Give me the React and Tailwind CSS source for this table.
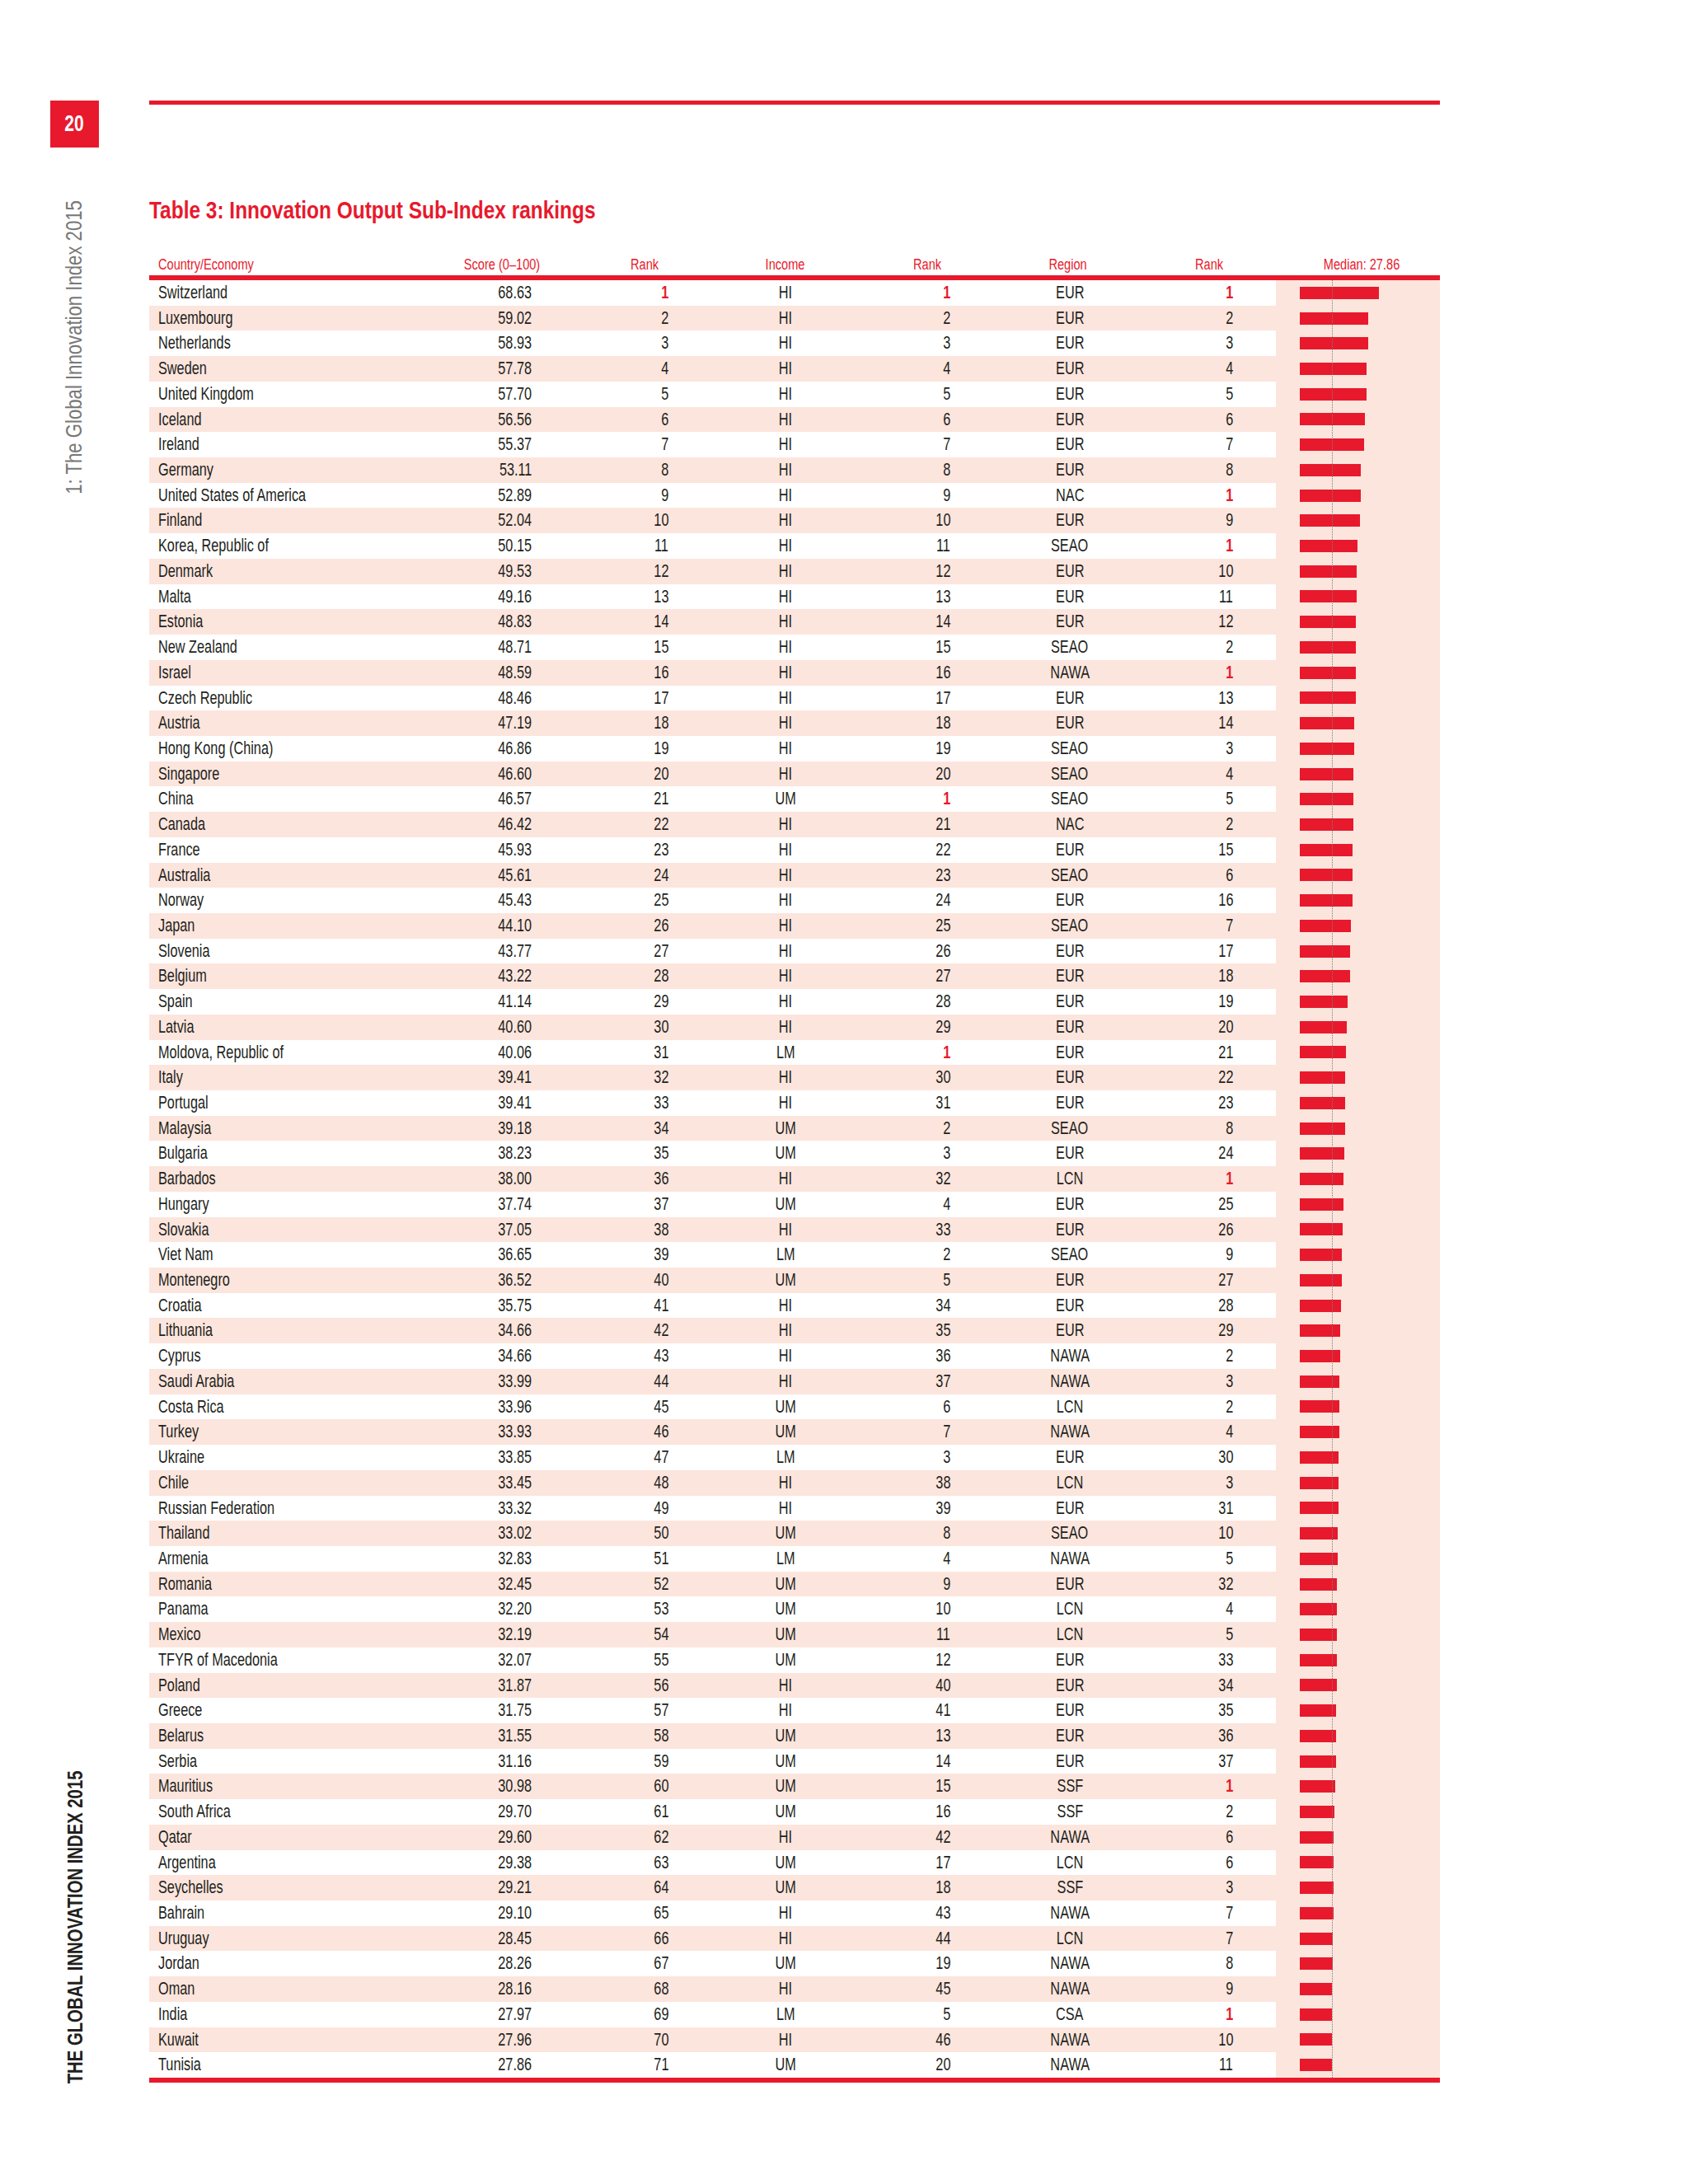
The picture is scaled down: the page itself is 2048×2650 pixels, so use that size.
import React from "react";

const ROWS = [
  ["Switzerland", "68.63", 1, "HI", 1, "EUR", 1],
  ["Luxembourg", "59.02", 2, "HI", 2, "EUR", 2],
  ["Netherlands", "58.93", 3, "HI", 3, "EUR", 3],
  ["Sweden", "57.78", 4, "HI", 4, "EUR", 4],
  ["United Kingdom", "57.70", 5, "HI", 5, "EUR", 5],
  ["Iceland", "56.56", 6, "HI", 6, "EUR", 6],
  ["Ireland", "55.37", 7, "HI", 7, "EUR", 7],
  ["Germany", "53.11", 8, "HI", 8, "EUR", 8],
  ["United States of America", "52.89", 9, "HI", 9, "NAC", 1],
  ["Finland", "52.04", 10, "HI", 10, "EUR", 9],
  ["Korea, Republic of", "50.15", 11, "HI", 11, "SEAO", 1],
  ["Denmark", "49.53", 12, "HI", 12, "EUR", 10],
  ["Malta", "49.16", 13, "HI", 13, "EUR", 11],
  ["Estonia", "48.83", 14, "HI", 14, "EUR", 12],
  ["New Zealand", "48.71", 15, "HI", 15, "SEAO", 2],
  ["Israel", "48.59", 16, "HI", 16, "NAWA", 1],
  ["Czech Republic", "48.46", 17, "HI", 17, "EUR", 13],
  ["Austria", "47.19", 18, "HI", 18, "EUR", 14],
  ["Hong Kong (China)", "46.86", 19, "HI", 19, "SEAO", 3],
  ["Singapore", "46.60", 20, "HI", 20, "SEAO", 4],
  ["China", "46.57", 21, "UM", 1, "SEAO", 5],
  ["Canada", "46.42", 22, "HI", 21, "NAC", 2],
  ["France", "45.93", 23, "HI", 22, "EUR", 15],
  ["Australia", "45.61", 24, "HI", 23, "SEAO", 6],
  ["Norway", "45.43", 25, "HI", 24, "EUR", 16],
  ["Japan", "44.10", 26, "HI", 25, "SEAO", 7],
  ["Slovenia", "43.77", 27, "HI", 26, "EUR", 17],
  ["Belgium", "43.22", 28, "HI", 27, "EUR", 18],
  ["Spain", "41.14", 29, "HI", 28, "EUR", 19],
  ["Latvia", "40.60", 30, "HI", 29, "EUR", 20],
  ["Moldova, Republic of", "40.06", 31, "LM", 1, "EUR", 21],
  ["Italy", "39.41", 32, "HI", 30, "EUR", 22],
  ["Portugal", "39.41", 33, "HI", 31, "EUR", 23],
  ["Malaysia", "39.18", 34, "UM", 2, "SEAO", 8],
  ["Bulgaria", "38.23", 35, "UM", 3, "EUR", 24],
  ["Barbados", "38.00", 36, "HI", 32, "LCN", 1],
  ["Hungary", "37.74", 37, "UM", 4, "EUR", 25],
  ["Slovakia", "37.05", 38, "HI", 33, "EUR", 26],
  ["Viet Nam", "36.65", 39, "LM", 2, "SEAO", 9],
  ["Montenegro", "36.52", 40, "UM", 5, "EUR", 27],
  ["Croatia", "35.75", 41, "HI", 34, "EUR", 28],
  ["Lithuania", "34.66", 42, "HI", 35, "EUR", 29],
  ["Cyprus", "34.66", 43, "HI", 36, "NAWA", 2],
  ["Saudi Arabia", "33.99", 44, "HI", 37, "NAWA", 3],
  ["Costa Rica", "33.96", 45, "UM", 6, "LCN", 2],
  ["Turkey", "33.93", 46, "UM", 7, "NAWA", 4],
  ["Ukraine", "33.85", 47, "LM", 3, "EUR", 30],
  ["Chile", "33.45", 48, "HI", 38, "LCN", 3],
  ["Russian Federation", "33.32", 49, "HI", 39, "EUR", 31],
  ["Thailand", "33.02", 50, "UM", 8, "SEAO", 10],
  ["Armenia", "32.83", 51, "LM", 4, "NAWA", 5],
  ["Romania", "32.45", 52, "UM", 9, "EUR", 32],
  ["Panama", "32.20", 53, "UM", 10, "LCN", 4],
  ["Mexico", "32.19", 54, "UM", 11, "LCN", 5],
  ["TFYR of Macedonia", "32.07", 55, "UM", 12, "EUR", 33],
  ["Poland", "31.87", 56, "HI", 40, "EUR", 34],
  ["Greece", "31.75", 57, "HI", 41, "EUR", 35],
  ["Belarus", "31.55", 58, "UM", 13, "EUR", 36],
  ["Serbia", "31.16", 59, "UM", 14, "EUR", 37],
  ["Mauritius", "30.98", 60, "UM", 15, "SSF", 1],
  ["South Africa", "29.70", 61, "UM", 16, "SSF", 2],
  ["Qatar", "29.60", 62, "HI", 42, "NAWA", 6],
  ["Argentina", "29.38", 63, "UM", 17, "LCN", 6],
  ["Seychelles", "29.21", 64, "UM", 18, "SSF", 3],
  ["Bahrain", "29.10", 65, "HI", 43, "NAWA", 7],
  ["Uruguay", "28.45", 66, "HI", 44, "LCN", 7],
  ["Jordan", "28.26", 67, "UM", 19, "NAWA", 8],
  ["Oman", "28.16", 68, "HI", 45, "NAWA", 9],
  ["India", "27.97", 69, "LM", 5, "CSA", 1],
  ["Kuwait", "27.96", 70, "HI", 46, "NAWA", 10],
  ["Tunisia", "27.86", 71, "UM", 20, "NAWA", 11],
];

const BL = "inline-block origin-left scale-x-[0.74]";
const BR = "inline-block origin-right scale-x-[0.74]";
const BC = "inline-block origin-center scale-x-[0.74]";
const HL = "inline-block origin-left scale-x-[0.81]";
const HC = "inline-block origin-center scale-x-[0.81]";

function RankVal({ v }) {
  if (v === 1)
    return <span className={`${BR} font-bold text-[#e8192c]`}>1</span>;
  return <span className={BR}>{v}</span>;
}

export default function App() {
  return (
    <div className="w-[2048px] h-[2650px] bg-white flex font-['Liberation_Sans',Arial,sans-serif] text-[#231f20]">
      {/* left margin */}
      <div className="w-[181px] shrink-0 pl-[61px] flex">
        <div className="w-[59px] flex flex-col items-center">
          <div className="mt-[122px] w-[59px] h-[57px] bg-[#e8192c] text-white font-bold text-[27px] flex items-center justify-center">
            <span className="inline-block scale-x-[0.78]">20</span>
          </div>
          <div className="mt-[25px] [writing-mode:vertical-rl] rotate-180 scale-y-[0.82] origin-center text-[27px] leading-[27px] text-[#787878] whitespace-nowrap">
            1: The Global Innovation Index 2015
          </div>
          <div className="mt-auto mb-[68px] [writing-mode:vertical-rl] rotate-180 scale-y-[0.78] origin-center text-[26px] leading-[26px] font-bold text-[#231f20] whitespace-nowrap">
            THE GLOBAL INNOVATION INDEX 2015
          </div>
        </div>
      </div>

      {/* main */}
      <div className="w-[1566px] flex flex-col">
        <div className="mt-[122px] h-[5px] bg-[#e8192c]" />
        <div className="mt-[113px] text-[30px] leading-[30px] font-bold text-[#e8192c] whitespace-nowrap">
          <span className="inline-block origin-left scale-x-[0.815]">
            Table 3: Innovation Output Sub-Index rankings
          </span>
        </div>

        {/* header */}
        <div className="mt-[42px] flex text-[18px] leading-[18px] text-[#e8192c] pb-[4px] whitespace-nowrap">
          <div className="w-[339px] pl-[11px]">
            <span className={HL}>Country/Economy</span>
          </div>
          <div className="w-[178px] text-center">
            <span className={HC}>Score (0–100)</span>
          </div>
          <div className="w-[168px] text-center">
            <span className={HC}>Rank</span>
          </div>
          <div className="w-[174px] text-center">
            <span className={HC}>Income</span>
          </div>
          <div className="w-[170px] text-center">
            <span className={HC}>Rank</span>
          </div>
          <div className="w-[172px] text-center">
            <span className={HC}>Region</span>
          </div>
          <div className="w-[166px] text-center pl-[4px]">
            <span className={HC}>Rank</span>
          </div>
          <div className="w-[199px] text-center pl-[10px]">
            <span className={HC}>Median: 27.86</span>
          </div>
        </div>
        <div className="h-[6px] bg-[#e8192c]" />

        {/* body */}
        <div className="relative flex flex-col">
          {ROWS.map((r, i) => (
            <div
              key={r[0]}
              className={`flex h-[30.73px] leading-[30.73px] text-[22px] whitespace-nowrap ${
                i % 2 === 1 ? "bg-[#fce5dd]" : "bg-white"
              }`}
            >
              <div className="w-[339px] pl-[11px]">
                <span className={BL}>{r[0]}</span>
              </div>
              <div className="w-[178px] text-right pr-[53px]">
                <span className={BR}>{r[1]}</span>
              </div>
              <div className="w-[168px] text-right pr-[55px]">
                <RankVal v={r[2]} />
              </div>
              <div className="w-[174px] text-center">
                <span className={BC}>{r[3]}</span>
              </div>
              <div className="w-[170px] text-right pr-[57px]">
                <RankVal v={r[4]} />
              </div>
              <div className="w-[172px] text-center pl-[4px]">
                <span className={BC}>{r[5]}</span>
              </div>
              <div className="w-[166px] text-right pr-[52px]">
                <RankVal v={r[6]} />
              </div>
              <div className="w-[199px] bg-[#fce5dd] flex items-center pl-[29px]">
                <div
                  className="h-[15px] bg-[#e8192c]"
                  style={{ width: `${parseFloat(r[1]) * 1.4}px` }}
                />
              </div>
            </div>
          ))}
          <div className="absolute left-[1435px] top-0 bottom-0 w-0 border-l border-dotted border-[#7d7d7d]" />
        </div>
        <div className="h-[6px] bg-[#e8192c]" />
      </div>
    </div>
  );
}
